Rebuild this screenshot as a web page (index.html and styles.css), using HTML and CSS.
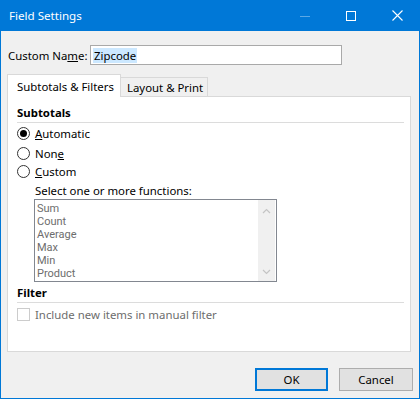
FILE: index.html
```html
<!DOCTYPE html>
<html>
<head>
<meta charset="utf-8">
<link rel="stylesheet" href="styles.css">
</head>
<body>
<div class="window">
  <div class="titlebar">
    <span class="title">Field Settings</span>
    <div class="controls">
      <span class="ctl"><svg width="10" height="10" viewBox="0 0 10 10"><line x1="0" y1="5.5" x2="10" y2="5.5" stroke="#5aa8e6" stroke-width="1"/></svg></span>
      <span class="ctl"><svg width="10" height="10" viewBox="0 0 10 10"><rect x="0.5" y="0.5" width="9" height="9" fill="none" stroke="#fff" stroke-width="1"/></svg></span>
      <span class="ctl"><svg width="11" height="11" viewBox="0 0 11 11"><path d="M0.5 0.5 L10.5 10.5 M10.5 0.5 L0.5 10.5" stroke="#fff" stroke-width="1.1"/></svg></span>
    </div>
  </div>
  <div class="content">
    <div class="name-row">
      <span class="label">Custom Na<u>m</u>e:</span>
      <div class="input"><span class="sel">Zipcode</span></div>
    </div>
    <div class="tabs">
      <div class="tab active">Subtotals &amp; Filters</div>
      <div class="tab">Layout &amp; Print</div>
    </div>
    <div class="panel">
      <div class="group-title">Subtotals</div>
      <div class="radio-row r1"><span class="radio checked"></span><span><u>A</u>utomatic</span></div>
      <div class="radio-row r2"><span class="radio"></span><span>Non<u>e</u></span></div>
      <div class="radio-row r3"><span class="radio"></span><span><u>C</u>ustom</span></div>
      <div class="func-label">Select one or more functions:</div>
      <div class="listbox">
        <div class="items">
          <div>Sum</div>
          <div>Count</div>
          <div>Average</div>
          <div>Max</div>
          <div>Min</div>
          <div>Product</div>
        </div>
        <div class="scrollbar">
          <svg width="9" height="6" viewBox="0 0 9 6"><path d="M1 5 L4.5 1.5 L8 5" fill="none" stroke="#c4c4c4" stroke-width="1.2"/></svg>
          <svg width="9" height="6" viewBox="0 0 9 6"><path d="M1 1 L4.5 4.5 L8 1" fill="none" stroke="#c4c4c4" stroke-width="1.2"/></svg>
        </div>
      </div>
      <div class="group-title filter">Filter</div>
      <div class="check-row"><span class="checkbox"></span><span>Include new items in manual filter</span></div>
    </div>
    <div class="buttons">
      <div class="btn default">OK</div>
      <div class="btn">Cancel</div>
    </div>
  </div>
</div>
</body>
</html>
```
FILE: styles.css
```css
* { box-sizing: border-box; }
html, body { margin: 0; padding: 0; }
body {
  width: 420px;
  height: 399px;
  font-family: "Noto Sans", "Open Sans", sans-serif;
  font-size: 11.4px;
  line-height: 15px;
  color: #000;
  overflow: hidden;
  white-space: nowrap;
}
.window {
  width: 420px;
  height: 399px;
  background: #f0f0f0;
  border: 1px solid #0078d7;
  border-top: none;
  display: flex;
  flex-direction: column;
}
.titlebar {
  height: 31px;
  background: #0078d7;
  color: #fff;
  display: flex;
  align-items: center;
  margin: 0 -1px;
  padding-left: 9px;
}
.title { font-size: 11.6px; flex: 1; padding-bottom: 1px; }
.controls { display: flex; align-items: center; height: 100%; }
.ctl {
  width: 46px;
  height: 100%;
  display: flex;
  align-items: center;
  justify-content: center;
}
.ctl svg { display: block; }
.content {
  flex: 1;
  padding: 14px 6px 0 6px;
  display: flex;
  flex-direction: column;
}
.name-row {
  display: flex;
  align-items: center;
  height: 20px;
}
.label { width: 83px; padding-left: 1px; }
.input {
  width: 252px;
  height: 20px;
  background: #fff;
  border: 1px solid #a9a9a9;
  padding-left: 2px;
  display: flex;
  align-items: center;
}
.sel {
  background: #cce8ff;
  line-height: 15px;
  padding: 0 1px;
}
.tabs {
  display: flex;
  align-items: flex-end;
  margin-top: 9px;
  height: 22px;
  position: relative;
  z-index: 1;
}
.tab {
  height: 19px;
  padding: 0 6px;
  border: 1px solid #d9d9d9;
  border-bottom: none;
  background: #f0f0f0;
  display: flex;
  align-items: center;
}
.tab + .tab { border-left: none; width: 87px; }
.tab.active {
  height: 23px;
  background: #fff;
  padding: 0 9px;
  margin-bottom: -1px;
  width: 114px;
}
.panel {
  height: 256px;
  background: #fff;
  border: 1px solid #d9d9d9;
  width: 404px;
  padding: 7px 6px 0 9px;
}
.group-title {
  font-weight: bold;
  line-height: 17px;
  border-bottom: 1px solid #dcdcdc;
  padding-bottom: 1px;
}
.radio-row {
  display: flex;
  align-items: center;
  gap: 5px;
}
.radio-row.r1 { margin-top: 1px; height: 19px; }
.radio-row.r2 { height: 20px; }
.radio-row.r3 { height: 17px; }
.radio {
  width: 13px;
  height: 13px;
  border: 1px solid #333;
  border-radius: 50%;
  background: #fff;
  display: flex;
  align-items: center;
  justify-content: center;
}
.radio.checked::after {
  content: "";
  width: 7px;
  height: 7px;
  border-radius: 50%;
  background: #000;
}
.func-label {
  padding-left: 18px;
  line-height: 15px;
  margin-top: 3px;
}
.listbox {
  margin-left: 17px;
  margin-top: 1px;
  width: 243px;
  height: 83px;
  border: 1px solid #828790;
  display: flex;
  color: #6d6d6d;
}
.items {
  flex: 1;
  padding: 2px 0 0 2px;
  line-height: 13px;
  font-family: Roboto, "Noto Sans", sans-serif;
  font-size: 11px;
}
.scrollbar {
  width: 17px;
  margin: 0 1px 0 0;
  background: #f0f0f0;
  display: flex;
  flex-direction: column;
  justify-content: space-between;
  align-items: center;
  padding: 8px 0 6px;
}
.scrollbar svg { display: block; }
.group-title.filter { margin-top: 2px; }
.check-row {
  display: flex;
  align-items: center;
  gap: 5px;
  margin-top: 4px;
  color: #6d6d6d;
}
.checkbox {
  width: 13px;
  height: 13px;
  border: 1px solid #cccccc;
  background: #fff;
}
.buttons {
  display: flex;
  justify-content: flex-end;
  gap: 11px;
  margin-top: 16px;
}
.btn {
  width: 74px;
  height: 23px;
  background: #e1e1e1;
  border: 1px solid #adadad;
  display: flex;
  align-items: center;
  justify-content: center;
}
.btn.default {
  border: 2px solid #0078d7;
  width: 73px;
}
```
